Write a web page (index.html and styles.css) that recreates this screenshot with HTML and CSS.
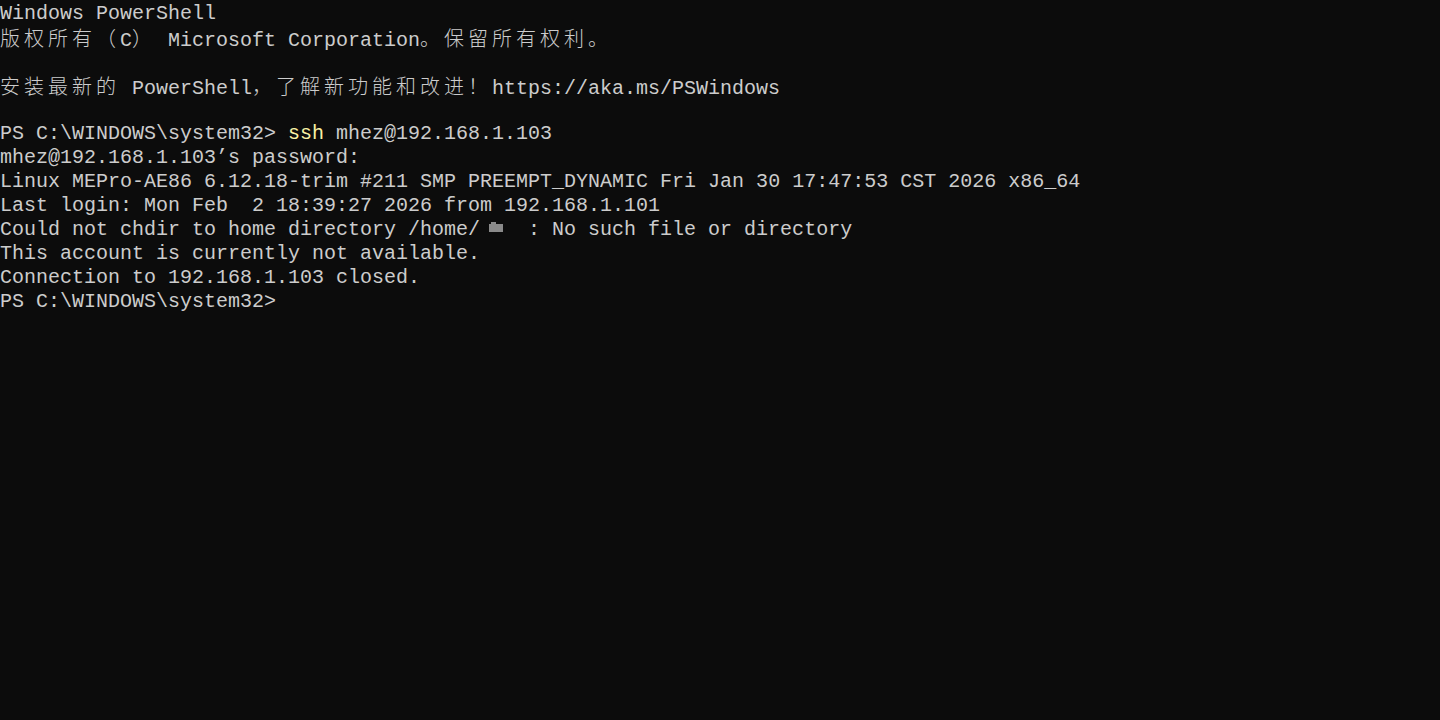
FILE: index.html
```html
<!DOCTYPE html>
<html lang="zh-CN">
<head>
<meta charset="utf-8">
<title>Windows PowerShell</title>
<link rel="stylesheet" href="styles.css">
</head>
<body>
<main class="term">
<div class="ln">Windows PowerShell</div>
<div class="ln"><span class="cjk">版权所有（</span>C<span class="cjk">）</span> Microsoft Corporation<span class="cjk">。保留所有权利。</span></div>
<div class="ln"> </div>
<div class="ln"><span class="cjk">安装最新的</span> PowerShell<span class="cjk">，了解新功能和改进！</span>https://aka.ms/PSWindows</div>
<div class="ln"> </div>
<div class="ln">PS C:\WINDOWS\system32&gt; <span class="cmd">ssh</span> mhez@192.168.1.103</div>
<div class="ln">mhez@192.168.1.103’s password:</div>
<div class="ln">Linux MEPro-AE86 6.12.18-trim #211 SMP PREEMPT_DYNAMIC Fri Jan 30 17:47:53 CST 2026 x86_64</div>
<div class="ln">Last login: Mon Feb  2 18:39:27 2026 from 192.168.1.101</div>
<div class="ln">Could not chdir to home directory /home/<span class="redact"><span class="blk"></span></span> : No such file or directory</div>
<div class="ln">This account is currently not available.</div>
<div class="ln">Connection to 192.168.1.103 closed.</div>
<div class="ln">PS C:\WINDOWS\system32&gt;</div>
</main>
</body>
</html>
```
FILE: styles.css
```css
html, body {
  margin: 0;
  padding: 0;
  background: #0c0c0c;
  height: 100%;
}
.term {
  padding-top: 2px;
  color: #cccccc;
  font-family: "Liberation Mono", "Noto Sans CJK SC", monospace;
  font-size: 20px;
}
.ln {
  height: 24px;
  line-height: 24px;
  white-space: pre;
}
.cjk {
  font-family: "Noto Sans CJK SC", sans-serif;
  font-size: 20px;
  letter-spacing: 4px;
  line-height: 24px;
  font-weight: 300;
}
.cmd {
  color: #f9f1a5;
}
.redact {
  display: inline-block;
  width: 36px;
  height: 24px;
  vertical-align: top;
  position: relative;
}
.blk {
  position: absolute;
  left: 9px;
  top: 6px;
  width: 14px;
  height: 8px;
  background: #8a8a8a;
}
.blk::before {
  content: "";
  position: absolute;
  left: 2px;
  top: -2px;
  width: 5px;
  height: 2px;
  background: #8a8a8a;
}
```
